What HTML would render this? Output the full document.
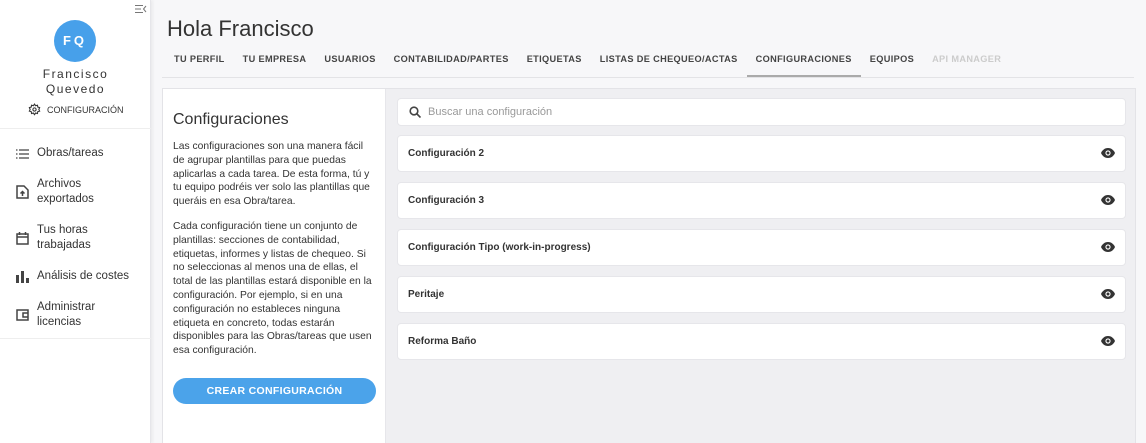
<!DOCTYPE html>
<html><head><meta charset="utf-8"><style>
*{box-sizing:border-box;margin:0;padding:0}
html,body{width:1146px;height:443px;overflow:hidden}
body{background:#f7f7f9;font-family:"Liberation Sans",sans-serif;color:#333;position:relative}
.side{position:absolute;left:0;top:0;width:151px;height:443px;background:#fff;border-right:1px solid #e6e6ea;box-shadow:2px 0 3px rgba(0,0,0,.05)}
.av{position:absolute;left:54px;top:20px;width:42px;height:42px;border-radius:50%;background:#47a0ea;color:#fff;font-size:13px;font-weight:bold;text-align:center;line-height:42px;letter-spacing:3px}
.name{position:absolute;left:0;width:151px;top:67px;text-align:center;font-size:12px;letter-spacing:1.5px;line-height:15px;color:#333}
.cfg{position:absolute;left:28px;top:103px;font-size:9px;color:#333;display:flex;align-items:center;gap:6px}
.hr{position:absolute;left:0;width:151px;height:1px;background:#eee}
.nav{position:absolute;left:16px;font-size:11.5px;line-height:15px;color:#333;display:flex;align-items:center}
.nav span{margin-left:8px}
.title{position:absolute;left:167px;top:16px;font-size:22px;color:#333}
.tabs{position:absolute;left:162px;top:52px;width:972px;height:26px;border-bottom:1px solid #e3e3e6;display:flex;font-size:9.2px;font-weight:bold;color:#444;letter-spacing:.35px}
.tabs div{padding:0 9px;line-height:14px;height:25px}
.tabs div:first-child{padding-left:12px}
.tabs .act{border-bottom:2px solid #aaa}
.tabs .dis{color:#ccc}
.box{position:absolute;left:162px;top:88px;width:974px;height:360px;background:#efeff2;border:1px solid #e3e3e7}
.left{position:absolute;left:0;top:0;width:223px;height:360px;background:#fff;border-right:1px solid #e6e6ea}
.left h2{position:absolute;left:10px;top:22px;font-size:16px;font-weight:normal;color:#333}
.left p{position:absolute;left:10px;width:204px;font-size:10.3px;line-height:13.8px;color:#333}
.btn{position:absolute;left:10px;top:289px;width:203px;height:26px;border-radius:13px;background:#4ba3ea;color:#fff;font-size:10.5px;font-weight:bold;text-align:center;line-height:26px;letter-spacing:.3px}
.search{position:absolute;left:234px;top:9px;width:729px;height:28px;background:#fff;border:1px solid #e6e6ea;border-radius:4px;font-size:11px;color:#999;line-height:26px;padding-left:30px}
.card{position:absolute;left:234px;width:729px;height:37px;background:#fff;border:1px solid #e6e6ea;border-radius:4px;font-size:10px;font-weight:bold;color:#333;line-height:35px;padding-left:10px}
.eye{position:absolute;right:10px;top:12px}
</style></head><body>
<div class="side">
<svg style="position:absolute;left:135px;top:4px" width="12" height="10" viewBox="0 0 12 10" stroke="#777" fill="none" stroke-width="1"><path d="M0 1.5h8M0 5h6M0 8.5h8M11 2L8.5 5L11 8"/></svg>
<div class="av">FQ</div>
<div class="name">Francisco<br>Quevedo</div>
<div class="cfg"><svg width="13" height="13" viewBox="0 0 24 24" fill="none" stroke="#333" stroke-width="2"><circle cx="12" cy="12" r="3"/><path d="M12 2l2 3 3.5-1 .5 3.5 3.5 1-1.5 3.5 1.5 3-3.5 1-.5 3.5-3.5-1-2 3-2-3-3.5 1-.5-3.5-3.5-1 1.5-3-1.5-3.5 3.5-1 .5-3.5 3.5 1z"/></svg>CONFIGURACIÓN</div>
<div class="hr" style="top:128px"></div>
<div class="nav" style="top:146px"><svg width="13" height="10" viewBox="0 0 13 10" stroke="#444" stroke-width="1.2"><path d="M0 1h1.5M3 1h10M0 5h1.5M3 5h10M0 9h1.5M3 9h10"/></svg><span>Obras/tareas</span></div>
<div class="nav" style="top:177px"><svg width="13" height="14" viewBox="0 0 13 14" fill="none" stroke="#444" stroke-width="1.5"><path d="M1 1h7l4 4v8H1z"/><path d="M6.5 11V6.5M4.5 8.5l2-2 2 2"/></svg><span>Archivos<br>exportados</span></div>
<div class="nav" style="top:223px"><svg width="13" height="13" viewBox="0 0 13 13" fill="none" stroke="#444" stroke-width="1.5"><rect x="1" y="2" width="11" height="10"/><path d="M1 5h11M3.5 0v3M9.5 0v3"/></svg><span>Tus horas<br>trabajadas</span></div>
<div class="nav" style="top:269px"><svg width="13" height="12" viewBox="0 0 13 12" fill="#444"><rect x="0" y="4" width="3" height="8"/><rect x="5" y="0" width="3" height="12"/><rect x="10" y="7" width="3" height="5"/></svg><span>Análisis de costes</span></div>
<div class="nav" style="top:300px"><svg width="13" height="12" viewBox="0 0 13 12" fill="none" stroke="#444" stroke-width="1.5"><rect x="1" y="1" width="11" height="10"/><path d="M12 4H7v4h5"/></svg><span>Administrar<br>licencias</span></div>
<div class="hr" style="top:338px"></div>
</div>
<div class="title">Hola Francisco</div>
<div class="tabs"><div>TU PERFIL</div><div>TU EMPRESA</div><div>USUARIOS</div><div>CONTABILIDAD/PARTES</div><div>ETIQUETAS</div><div>LISTAS DE CHEQUEO/ACTAS</div><div class="act">CONFIGURACIONES</div><div>EQUIPOS</div><div class="dis">API MANAGER</div></div>
<div class="box">
<div class="left">
<h2>Configuraciones</h2>
<p style="top:51px">Las configuraciones son una manera fácil de agrupar plantillas para que puedas aplicarlas a cada tarea. De esta forma, tú y tu equipo podréis ver solo las plantillas que queráis en esa Obra/tarea.</p>
<p style="top:131px">Cada configuración tiene un conjunto de plantillas: secciones de contabilidad, etiquetas, informes y listas de chequeo. Si no seleccionas al menos una de ellas, el total de las plantillas estará disponible en la configuración. Por ejemplo, si en una configuración no estableces ninguna etiqueta en concreto, todas estarán disponibles para las Obras/tareas que usen esa configuración.</p>
<div class="btn">CREAR CONFIGURACIÓN</div>
</div>
<div class="search"><svg style="position:absolute;left:11px;top:7px" width="12" height="12" viewBox="0 0 12 12" fill="none" stroke="#444" stroke-width="1.6"><circle cx="5" cy="5" r="3.8"/><path d="M8 8l3.5 3.5"/></svg>Buscar una configuración</div>
<div class="card" style="top:46px">Configuración 2<svg class="eye" width="14" height="10" viewBox="0 0 14 10"><path d="M7 0C3.5 0 1 2.5 0 5c1 2.5 3.5 5 7 5s6-2.5 7-5c-1-2.5-3.5-5-7-5z" fill="#333"/><circle cx="7" cy="5" r="2.6" fill="#fff"/><circle cx="7" cy="5" r="1.5" fill="#333"/></svg></div>
<div class="card" style="top:93px">Configuración 3<svg class="eye" width="14" height="10" viewBox="0 0 14 10"><path d="M7 0C3.5 0 1 2.5 0 5c1 2.5 3.5 5 7 5s6-2.5 7-5c-1-2.5-3.5-5-7-5z" fill="#333"/><circle cx="7" cy="5" r="2.6" fill="#fff"/><circle cx="7" cy="5" r="1.5" fill="#333"/></svg></div>
<div class="card" style="top:140px">Configuración Tipo (work-in-progress)<svg class="eye" width="14" height="10" viewBox="0 0 14 10"><path d="M7 0C3.5 0 1 2.5 0 5c1 2.5 3.5 5 7 5s6-2.5 7-5c-1-2.5-3.5-5-7-5z" fill="#333"/><circle cx="7" cy="5" r="2.6" fill="#fff"/><circle cx="7" cy="5" r="1.5" fill="#333"/></svg></div>
<div class="card" style="top:187px">Peritaje<svg class="eye" width="14" height="10" viewBox="0 0 14 10"><path d="M7 0C3.5 0 1 2.5 0 5c1 2.5 3.5 5 7 5s6-2.5 7-5c-1-2.5-3.5-5-7-5z" fill="#333"/><circle cx="7" cy="5" r="2.6" fill="#fff"/><circle cx="7" cy="5" r="1.5" fill="#333"/></svg></div>
<div class="card" style="top:234px">Reforma Baño<svg class="eye" width="14" height="10" viewBox="0 0 14 10"><path d="M7 0C3.5 0 1 2.5 0 5c1 2.5 3.5 5 7 5s6-2.5 7-5c-1-2.5-3.5-5-7-5z" fill="#333"/><circle cx="7" cy="5" r="2.6" fill="#fff"/><circle cx="7" cy="5" r="1.5" fill="#333"/></svg></div>
</div>
</body></html>
